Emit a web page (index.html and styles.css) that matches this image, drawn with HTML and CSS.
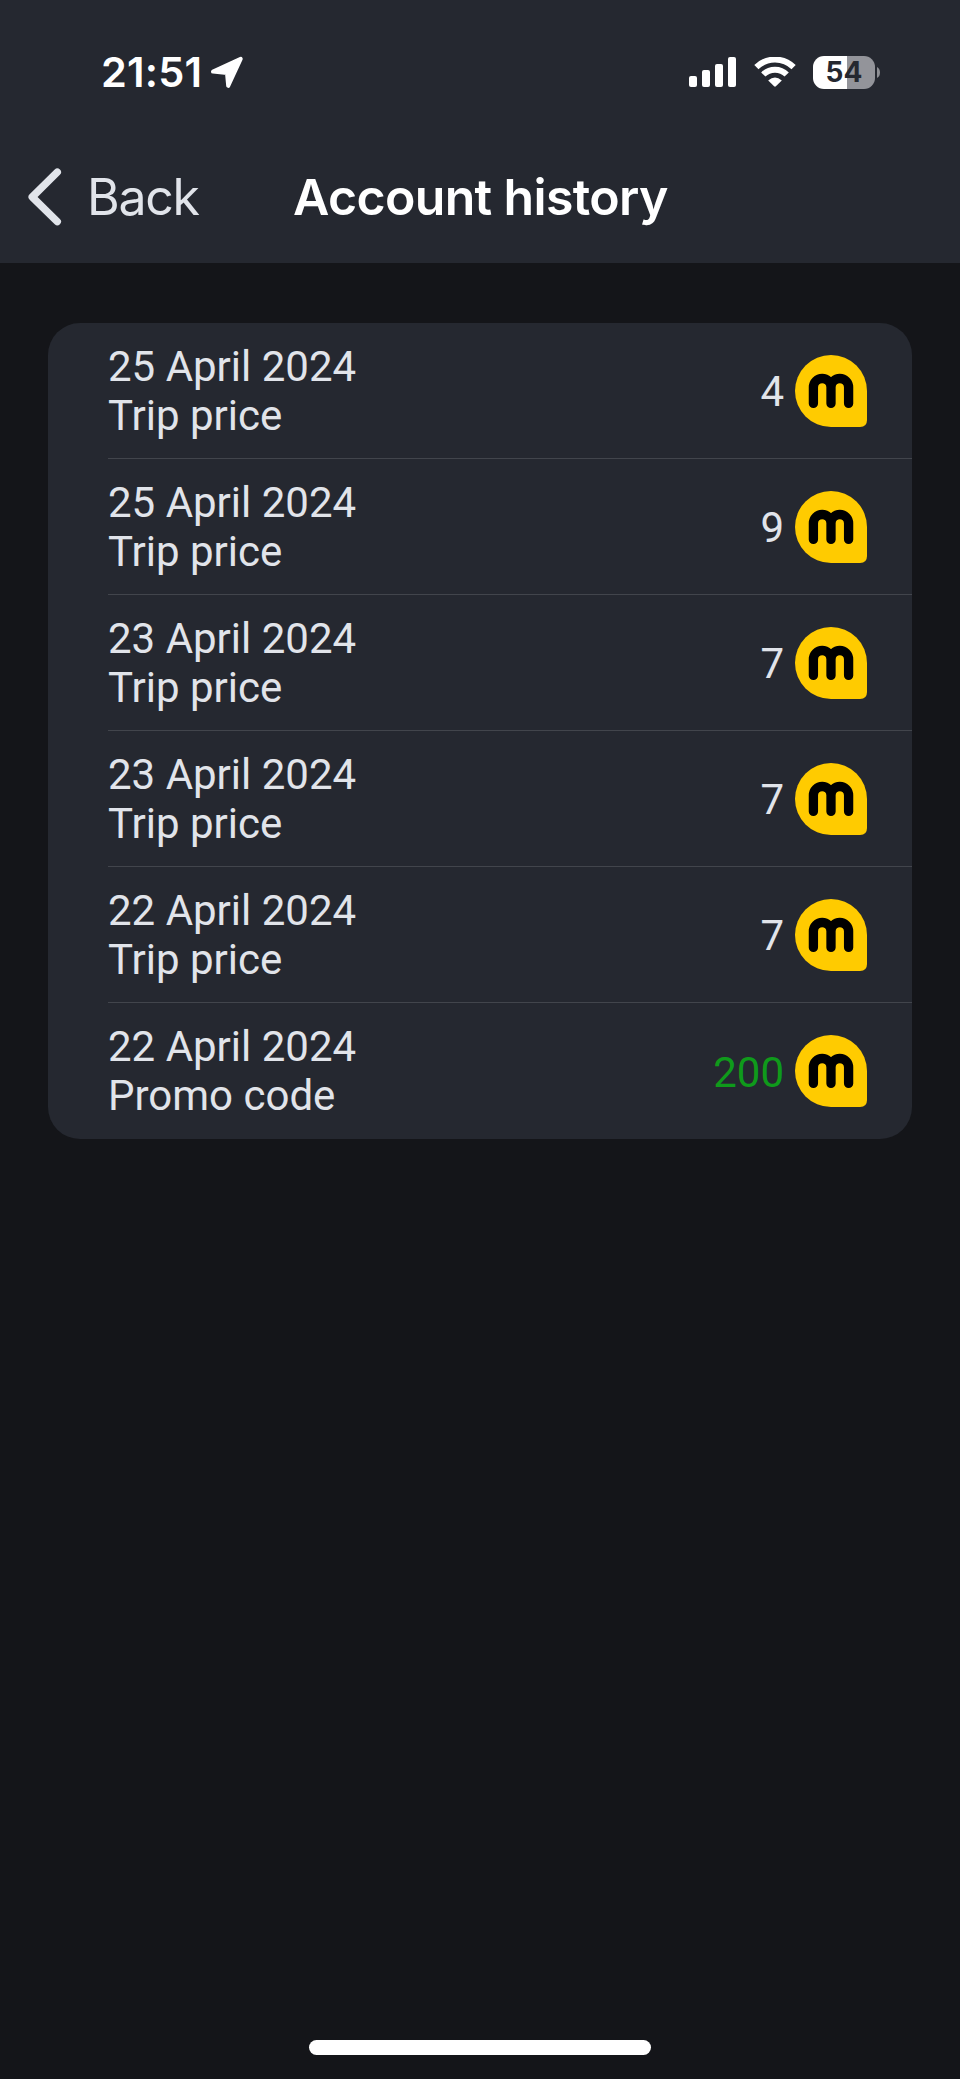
FILE: index.html
```html
<!DOCTYPE html>
<html lang="en">
<head>
<meta charset="utf-8">
<title>Account history</title>
<link rel="stylesheet" href="styles.css">
</head>
<body>
<svg class="defs" width="0" height="0" aria-hidden="true">
  <symbol id="coin" viewBox="0 0 72 72">
    <path fill="#ffcb00" d="M36 0A36 36 0 0 1 72 36V65Q72 72 65 72H36A36 36 0 0 1 36 0Z"/>
    <path fill="none" stroke="#000" stroke-width="9.3" stroke-linecap="round" d="M18.4 48.4V32.3a8.8 8.8 0 0 1 17.6 0V48.4M36 32.3a8.8 8.8 0 0 1 17.6 0V48.4"/>
  </symbol>
</svg>
<header class="header">
  <div class="status">
    <div class="clock">
      <span class="time">21:51</span>
      <svg class="location" width="32" height="32" viewBox="0 0 32 32"><path fill="#fff" stroke="#fff" stroke-width="4" stroke-linejoin="round" d="M2 15.6L29.7 2.8L17.2 29.8L16 17Z"/></svg>
    </div>
    <div class="indicators">
      <svg class="signal" width="48" height="30" viewBox="0 0 48 30" fill="#fff"><rect x="0" y="19" width="8" height="11" rx="2"/><rect x="13" y="13" width="8" height="17" rx="2"/><rect x="26" y="7" width="8" height="23" rx="2"/><rect x="39" y="0" width="8" height="30" rx="2"/></svg>
      <svg class="wifi" width="42" height="30" viewBox="0 0 42 30"><g fill="none" stroke="#fff" stroke-width="6"><path d="M2.4 10.2A26.5 26.5 0 0 1 39.6 10.2"/><path d="M9.3 17.5A16.5 16.5 0 0 1 32.7 17.5"/></g><path fill="#fff" d="M14.2 23.4Q21 17.6 27.8 23.4L21.9 29.3Q21 30.1 20.1 29.3Z"/></svg>
      <div class="battery"><span class="level">54</span></div>
      <svg class="nub" width="3" height="11" viewBox="0 0 3 11"><path fill="#8e8f94" d="M0 0Q3 1.5 3 5.5T0 11Z"/></svg>
    </div>
  </div>
  <nav class="nav">
    <a class="back"><svg width="34" height="58" viewBox="0 0 34 58"><path fill="none" stroke="#e1e4ea" stroke-width="7.4" stroke-linecap="round" stroke-linejoin="round" d="M29.3 4.2L4.2 29L29.3 53.6"/></svg><span class="back-label">Back</span></a>
    <h1 class="title">Account history</h1>
  </nav>
</header>
<main class="content">
  <ul class="history">
    <li class="entry"><div class="info"><span>25 April 2024</span><span>Trip price</span></div><div class="amount"><span class="value">4</span><svg class="coin"><use href="#coin"/></svg></div></li>
    <li class="entry"><div class="info"><span>25 April 2024</span><span>Trip price</span></div><div class="amount"><span class="value">9</span><svg class="coin"><use href="#coin"/></svg></div></li>
    <li class="entry"><div class="info"><span>23 April 2024</span><span>Trip price</span></div><div class="amount"><span class="value">7</span><svg class="coin"><use href="#coin"/></svg></div></li>
    <li class="entry"><div class="info"><span>23 April 2024</span><span>Trip price</span></div><div class="amount"><span class="value">7</span><svg class="coin"><use href="#coin"/></svg></div></li>
    <li class="entry"><div class="info"><span>22 April 2024</span><span>Trip price</span></div><div class="amount"><span class="value">7</span><svg class="coin"><use href="#coin"/></svg></div></li>
    <li class="entry"><div class="info"><span>22 April 2024</span><span>Promo code</span></div><div class="amount credit"><span class="value">200</span><svg class="coin"><use href="#coin"/></svg></div></li>
  </ul>
</main>
<footer class="home"><div class="home-bar"></div></footer>
</body>
</html>
```

FILE: styles.css
```css
* { box-sizing: border-box; }
body {
  margin: 0;
  width: 960px;
  height: 2079px;
  display: flex;
  flex-direction: column;
  overflow: hidden;
  background: #141519;
  color: #e1e4ea;
  font-family: Roboto, sans-serif;
}
.defs { position: absolute; }
svg { display: block; flex: none; }
.header {
  height: 263px;
  background: #252830;
  font-family: Inter, sans-serif;
}
.status {
  height: 134px;
  padding: 10px 80px 0 101px;
  display: flex;
  align-items: center;
  justify-content: space-between;
}
.clock, .indicators { display: flex; align-items: center; }
.clock { gap: 9px; }
.time {
  color: #fff;
  font-size: 41.5px;
  font-weight: 600;
  letter-spacing: 0.2px;
  line-height: 50px;
}
.signal { margin-right: 17px; }
.wifi { margin-right: 17px; }
.battery {
  width: 62px;
  height: 33px;
  margin-right: 2px;
  border-radius: 11px;
  background: linear-gradient(90deg, #fff 34px, #93949a 34px);
  display: flex;
  align-items: center;
  justify-content: center;
}
.level {
  color: #252830;
  font-size: 28px;
  font-weight: 700;
  line-height: 33px;
}
.nav {
  height: 129px;
  padding: 0 28px;
  display: grid;
  grid-template-columns: 265px 1fr;
}
.back {
  display: flex;
  align-items: flex-start;
  gap: 25px;
  padding-top: 34px;
  font-size: 50px;
  line-height: 60px;
}
.back-label {
  margin-top: -1px;
  letter-spacing: -1.3px;
}
.title {
  margin: 0;
  padding-top: 33px;
  color: #fff;
  font-size: 50px;
  font-weight: 600;
  letter-spacing: -0.65px;
  line-height: 60px;
  white-space: nowrap;
}
.content { flex: 1; padding: 60px 48px 0; }
.history {
  list-style: none;
  margin: 0;
  padding: 0 0 0 60px;
  border-radius: 32px;
  background: #252830;
  font-size: 42px;
  line-height: 49px;
}
.entry {
  height: 136px;
  padding-right: 45px;
  display: flex;
  align-items: center;
  justify-content: space-between;
  border-bottom: 1px solid #42454c;
}
.entry:last-child { border-bottom: 0; }
.info { display: flex; flex-direction: column; }
.amount { display: flex; align-items: center; gap: 11px; }
.value { padding-top: 2px; }
.credit { color: #0f9a1b; }
.coin { width: 72px; height: 72px; }
.home { height: 39px; display: flex; justify-content: center; }
.home-bar {
  width: 342px;
  height: 15px;
  border-radius: 8px;
  background: #fff;
}
```
